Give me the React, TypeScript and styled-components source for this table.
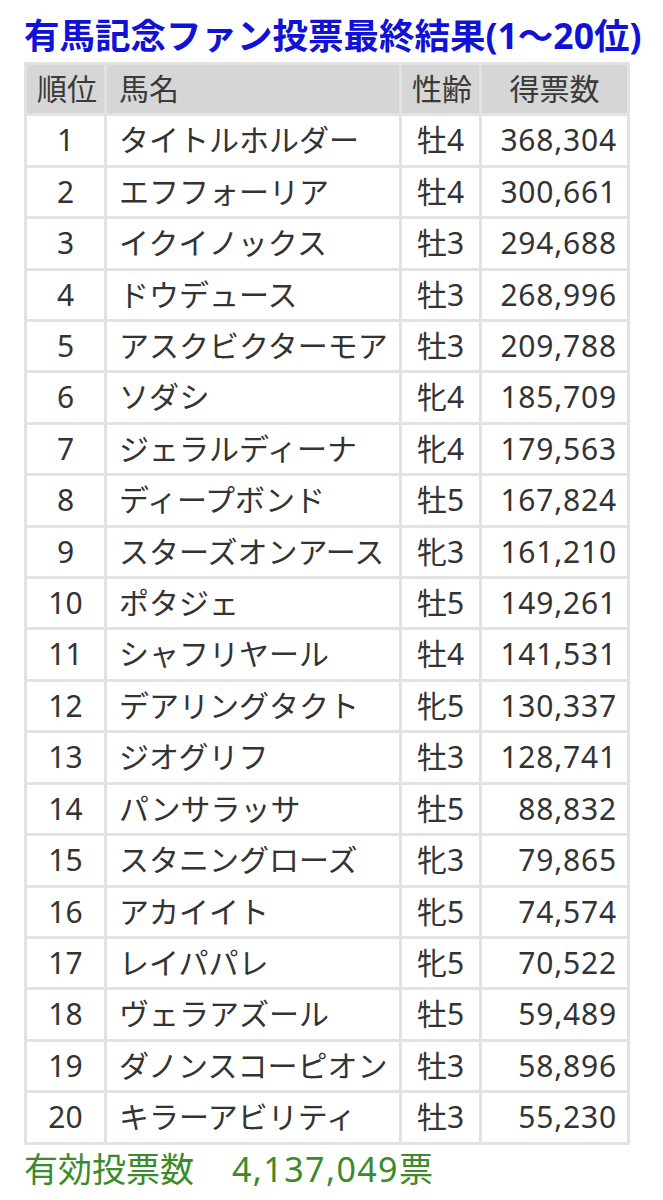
import styled, { createGlobalStyle } from "styled-components";

const GlobalStyle = createGlobalStyle`
  html, body {
    margin: 0;
    padding: 0;
    background: #ffffff;
  }
  body {
    font-family: "Noto Sans", "Noto Sans CJK JP", sans-serif;
  }
`;

const results = [
  { rank: 1, name: "タイトルホルダー", sex: "牡4", votes: "368,304" },
  { rank: 2, name: "エフフォーリア", sex: "牡4", votes: "300,661" },
  { rank: 3, name: "イクイノックス", sex: "牡3", votes: "294,688" },
  { rank: 4, name: "ドウデュース", sex: "牡3", votes: "268,996" },
  { rank: 5, name: "アスクビクターモア", sex: "牡3", votes: "209,788" },
  { rank: 6, name: "ソダシ", sex: "牝4", votes: "185,709" },
  { rank: 7, name: "ジェラルディーナ", sex: "牝4", votes: "179,563" },
  { rank: 8, name: "ディープボンド", sex: "牡5", votes: "167,824" },
  { rank: 9, name: "スターズオンアース", sex: "牝3", votes: "161,210" },
  { rank: 10, name: "ポタジェ", sex: "牡5", votes: "149,261" },
  { rank: 11, name: "シャフリヤール", sex: "牡4", votes: "141,531" },
  { rank: 12, name: "デアリングタクト", sex: "牝5", votes: "130,337" },
  { rank: 13, name: "ジオグリフ", sex: "牡3", votes: "128,741" },
  { rank: 14, name: "パンサラッサ", sex: "牡5", votes: "88,832" },
  { rank: 15, name: "スタニングローズ", sex: "牝3", votes: "79,865" },
  { rank: 16, name: "アカイイト", sex: "牝5", votes: "74,574" },
  { rank: 17, name: "レイパパレ", sex: "牝5", votes: "70,522" },
  { rank: 18, name: "ヴェラアズール", sex: "牡5", votes: "59,489" },
  { rank: 19, name: "ダノンスコーピオン", sex: "牡3", votes: "58,896" },
  { rank: 20, name: "キラーアビリティ", sex: "牡3", votes: "55,230" },
];

const Page = styled.div`
  padding: 14px 0 0 24px;
  width: 603px;
`;

const Title = styled.h1`
  margin: 0 0 6px;
  font-size: 35.5px;
  line-height: 42px;
  font-weight: 700;
  color: #1212d6;
  white-space: nowrap;
`;

const Table = styled.table`
  width: 603px;
  border-collapse: collapse;
  table-layout: fixed;
  border: 3px solid #e2e2e2;
  font-size: 30px;
  color: #333333;
`;

const Cell = styled.td<{ $align?: "left" | "center" | "right" }>`
  border: 3px solid #e2e2e2;
  padding: 0 10px;
  height: 48.4px;
  line-height: 48.4px;
  text-align: ${(p) => p.$align ?? "center"};
  white-space: nowrap;
  overflow: hidden;
`;

const HeadCell = styled(Cell).attrs({ as: "th" })`
  background: #d6d6d6;
  font-weight: 400;
  color: #3a3a3a;
`;

const NameCell = styled(Cell)`
  padding-left: 12px;
`;

const VotesCell = styled(Cell)`
  padding-right: 10px;
  letter-spacing: 0.8px;
`;

const Total = styled.p`
  display: flex;
  gap: 38px;
  margin: 2px 0 0;
  font-size: 34px;
  line-height: 44px;
  color: #3b8a2b;
  white-space: nowrap;
`;

const Count = styled.span`
  letter-spacing: 1.4px;
`;

const App = () => {
  return (
    <Page>
      <GlobalStyle />
      <Title>有馬記念ファン投票最終結果(1〜20位)</Title>
      <Table>
        <colgroup>
          <col style={{ width: 80 }} />
          <col style={{ width: 295 }} />
          <col style={{ width: 80 }} />
          <col style={{ width: 148 }} />
        </colgroup>
        <thead>
          <tr>
            <HeadCell>順位</HeadCell>
            <HeadCell $align="left" style={{ paddingLeft: 12 }}>
              馬名
            </HeadCell>
            <HeadCell>性齢</HeadCell>
            <HeadCell>得票数</HeadCell>
          </tr>
        </thead>
        <tbody>
          {results.map((r) => (
            <tr key={r.rank}>
              <Cell>{r.rank}</Cell>
              <NameCell $align="left">{r.name}</NameCell>
              <Cell>{r.sex}</Cell>
              <VotesCell $align="right">{r.votes}</VotesCell>
            </tr>
          ))}
        </tbody>
      </Table>
      <Total>
        <span>有効投票数</span>
        <Count>4,137,049票</Count>
      </Total>
    </Page>
  );
};

export default App;
